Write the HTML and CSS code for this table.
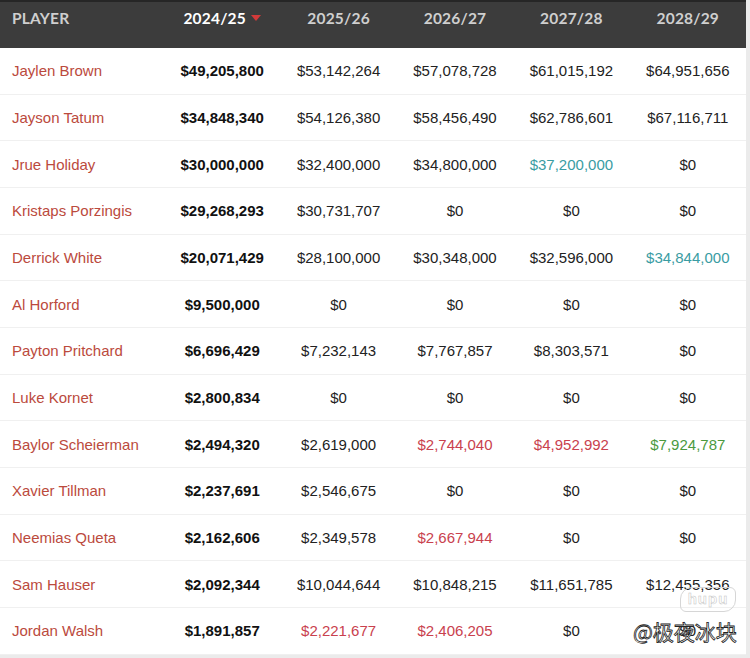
FILE: index.html
```html
<!DOCTYPE html>
<html>
<head>
<meta charset="utf-8">
<link rel="stylesheet" href="styles.css">
</head>
<body>
<div class="sheet">
  <div class="table">
    <div class="row head">
      <div class="cell player">PLAYER</div>
      <div class="cell current">2024/25<span class="sort"></span></div>
      <div class="cell">2025/26</div>
      <div class="cell">2026/27</div>
      <div class="cell">2027/28</div>
      <div class="cell">2028/29</div>
    </div>
    <div class="row"><div class="cell player">Jaylen Brown</div><div class="cell bold">$49,205,800</div><div class="cell">$53,142,264</div><div class="cell">$57,078,728</div><div class="cell">$61,015,192</div><div class="cell">$64,951,656</div></div>
    <div class="row"><div class="cell player">Jayson Tatum</div><div class="cell bold">$34,848,340</div><div class="cell">$54,126,380</div><div class="cell">$58,456,490</div><div class="cell">$62,786,601</div><div class="cell">$67,116,711</div></div>
    <div class="row"><div class="cell player">Jrue Holiday</div><div class="cell bold">$30,000,000</div><div class="cell">$32,400,000</div><div class="cell">$34,800,000</div><div class="cell teal">$37,200,000</div><div class="cell">$0</div></div>
    <div class="row"><div class="cell player">Kristaps Porzingis</div><div class="cell bold">$29,268,293</div><div class="cell">$30,731,707</div><div class="cell">$0</div><div class="cell">$0</div><div class="cell">$0</div></div>
    <div class="row"><div class="cell player">Derrick White</div><div class="cell bold">$20,071,429</div><div class="cell">$28,100,000</div><div class="cell">$30,348,000</div><div class="cell">$32,596,000</div><div class="cell teal">$34,844,000</div></div>
    <div class="row"><div class="cell player">Al Horford</div><div class="cell bold">$9,500,000</div><div class="cell">$0</div><div class="cell">$0</div><div class="cell">$0</div><div class="cell">$0</div></div>
    <div class="row"><div class="cell player">Payton Pritchard</div><div class="cell bold">$6,696,429</div><div class="cell">$7,232,143</div><div class="cell">$7,767,857</div><div class="cell">$8,303,571</div><div class="cell">$0</div></div>
    <div class="row"><div class="cell player">Luke Kornet</div><div class="cell bold">$2,800,834</div><div class="cell">$0</div><div class="cell">$0</div><div class="cell">$0</div><div class="cell">$0</div></div>
    <div class="row"><div class="cell player">Baylor Scheierman</div><div class="cell bold">$2,494,320</div><div class="cell">$2,619,000</div><div class="cell red">$2,744,040</div><div class="cell red">$4,952,992</div><div class="cell green">$7,924,787</div></div>
    <div class="row"><div class="cell player">Xavier Tillman</div><div class="cell bold">$2,237,691</div><div class="cell">$2,546,675</div><div class="cell">$0</div><div class="cell">$0</div><div class="cell">$0</div></div>
    <div class="row"><div class="cell player">Neemias Queta</div><div class="cell bold">$2,162,606</div><div class="cell">$2,349,578</div><div class="cell red">$2,667,944</div><div class="cell">$0</div><div class="cell">$0</div></div>
    <div class="row"><div class="cell player">Sam Hauser</div><div class="cell bold">$2,092,344</div><div class="cell">$10,044,644</div><div class="cell">$10,848,215</div><div class="cell">$11,651,785</div><div class="cell">$12,455,356</div></div>
    <div class="row last"><div class="cell player">Jordan Walsh</div><div class="cell bold">$1,891,857</div><div class="cell red">$2,221,677</div><div class="cell red">$2,406,205</div><div class="cell">$0</div><div class="cell">$0</div></div>
  </div>
  <div class="logo-mark">hupu</div>
  <div class="credit">@极夜冰块</div>
</div>
</body>
</html>
```
FILE: styles.css
```css
* { box-sizing: border-box; }
html, body { margin: 0; padding: 0; background: #ffffff; }
body { width: 750px; height: 658px; overflow: hidden; }

.sheet {
  position: relative;
  width: 750px;
  height: 658px;
  background: #ebebeb;
  font-family: "Liberation Sans", Arial, sans-serif;
}

.table {
  width: 746px;
  background: #ffffff;
}

.row {
  display: grid;
  grid-template-columns: 164px repeat(5, 1fr);
  height: 46.67px;
  border-bottom: 1px solid #f0f0f0;
  align-items: center;
}

.row.head {
  height: 48px;
  align-items: start;
  background: #3c3c3c;
  border-top: 2px solid #262626;
  border-bottom: none;
}

.head .cell {
  font-family: Lato, "Liberation Sans", sans-serif;
  font-weight: 700;
  font-size: 15.5px;
  color: #cfcfcf;
  padding-top: 7px;
  letter-spacing: 0.2px;
}

.head .cell.current { color: #ffffff; }

.sort {
  display: inline-block;
  width: 0;
  height: 0;
  margin-left: 5px;
  border-left: 5px solid transparent;
  border-right: 5px solid transparent;
  border-top: 6px solid #d23a3a;
  vertical-align: middle;
  position: relative;
  top: -2px;
}

.cell {
  text-align: center;
  font-size: 15px;
  color: #222222;
  white-space: nowrap;
}

.cell.player {
  text-align: left;
  padding-left: 12px;
  color: #bb4a3d;
}

.head .cell.player { color: #cfcfcf; }

.cell.bold { font-weight: 700; color: #111111; }
.cell.teal { color: #3a9ca3; }
.cell.red { color: #c9414e; }
.cell.green { color: #4b9a3e; }

.logo-mark {
  position: absolute;
  left: 680px;
  top: 587px;
  width: 56px;
  height: 25px;
  border: 1px solid #d6d6d6;
  border-radius: 12px 6px 12px 6px;
  font-family: "Liberation Sans", sans-serif;
  font-weight: 700;
  font-size: 15px;
  line-height: 22px;
  text-align: center;
  color: rgba(255,255,255,0.85);
  -webkit-text-stroke: 0.5px #c4c4c4;
  letter-spacing: 1px;
}

.credit {
  position: absolute;
  left: 633px;
  top: 618px;
  font-family: "Noto Sans CJK SC", sans-serif;
  font-size: 21px;
  line-height: 27px;
  color: #ffffff;
  -webkit-text-stroke: 0.8px #222222;
}
```
